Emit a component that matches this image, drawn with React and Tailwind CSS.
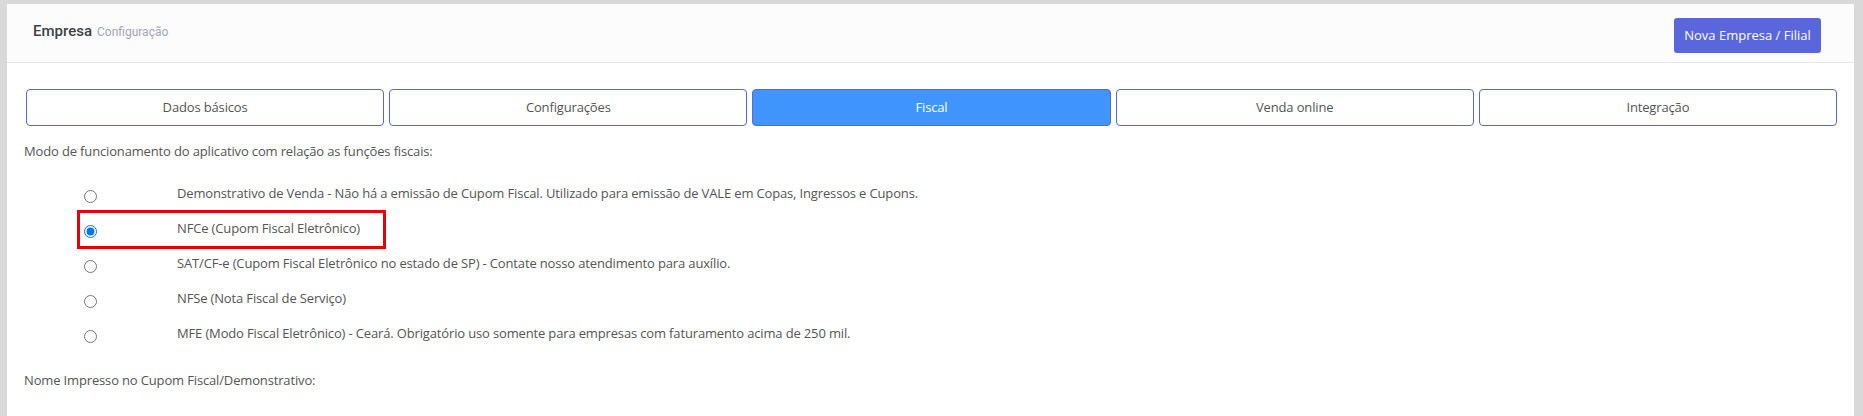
import { useState } from 'react';

const ABAS = ['Dados básicos', 'Configurações', 'Fiscal', 'Venda online', 'Integração'];

const MODOS = [
  'Demonstrativo de Venda - Não há a emissão de Cupom Fiscal. Utilizado para emissão de VALE em Copas, Ingressos e Cupons.',
  'NFCe (Cupom Fiscal Eletrônico)',
  'SAT/CF-e (Cupom Fiscal Eletrônico no estado de SP) - Contate nosso atendimento para auxílio.',
  'NFSe (Nota Fiscal de Serviço)',
  'MFE (Modo Fiscal Eletrônico) - Ceará. Obrigatório uso somente para empresas com faturamento acima de 250 mil.',
];

export default function App() {
  const [aba, setAba] = useState('Fiscal');
  const [modo, setModo] = useState(1);

  return (
    <div className="min-h-[416px] bg-[#d9d9d9] pt-[4px] pl-[7px] pr-[9px] font-['Open_Sans',sans-serif] text-[13px] tracking-[-0.15px] text-[#555]">
      <div className="min-h-[412px] bg-white">
        {/* cabeçalho */}
        <div className="h-[59px] flex items-center justify-between pl-[26px] pr-[33px] bg-[#fcfcfc] border-b border-[#e6e6e6]">
          <div className="flex items-baseline gap-[5px] font-['Roboto',sans-serif] tracking-normal -mt-[3px]">
            <span className="text-[15px] font-medium text-[#3f4148]">Empresa</span>
            <span className="text-[12px] text-[#a3a6b4]">Configuração</span>
          </div>
          <button className="h-[35px] w-[147px] mt-[5px] rounded-[3px] bg-[#5a67dc] text-white text-[13px] font-medium tracking-normal">
            Nova Empresa / Filial
          </button>
        </div>

        {/* abas */}
        <div className="grid grid-cols-5 gap-[5px] pl-[19px] pr-[17px] mt-[26px]">
          {ABAS.map((nome) => (
            <button
              key={nome}
              onClick={() => setAba(nome)}
              className={
                aba === nome
                  ? 'h-[37px] rounded-[4px] border border-[#5a67dc] bg-[#3f95fb] text-white'
                  : 'h-[37px] rounded-[4px] border border-[#5a67dc] bg-white text-[#555]'
              }
            >
              {nome}
            </button>
          ))}
        </div>

        <p className="pl-[17px] mt-[15px] leading-[20px]">Modo de funcionamento do aplicativo com relação as funções fiscais:</p>

        <div className="mt-[22px]">
          {MODOS.map((texto, i) => (
            <label key={i} className="relative flex items-start h-[35px] cursor-pointer">
              <span className="w-[170px] flex justify-end pr-[80px] pt-[7px]">
                <input
                  type="radio"
                  name="modo"
                  checked={modo === i}
                  onChange={() => setModo(i)}
                  className="m-0 w-[13px] h-[13px]"
                />
              </span>
              <span className="leading-[20px]">{texto}</span>
              {i === 1 && (
                <span className="absolute left-[70px] top-[-8px] w-[309px] h-[39px] border-[3px] border-[#e8000b] pointer-events-none" />
              )}
            </label>
          ))}
        </div>

        <p className="pl-[17px] mt-[12px] leading-[20px] pb-[26px]">Nome Impresso no Cupom Fiscal/Demonstrativo:</p>
      </div>
    </div>
  );
}
